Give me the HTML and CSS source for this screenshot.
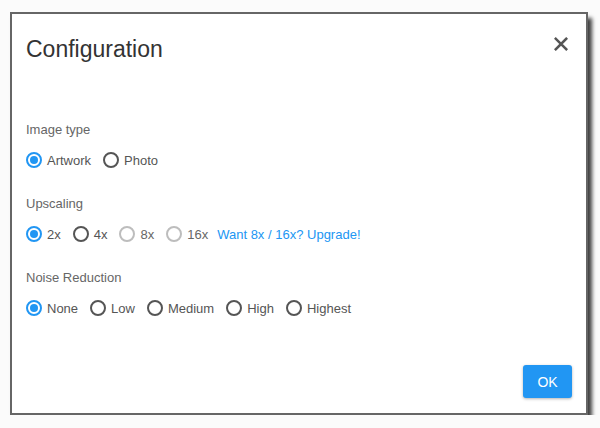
FILE: index.html
```html
<!DOCTYPE html>
<html>
<head>
    <title>Configuration</title>
    <meta name="viewport" content="width=device-width, initial-scale=1.0">
    <link rel="stylesheet" href="styles.css">
</head>
<body>
    <div class="dialog">
        <div class="dialog-header">
            <h2>Configuration</h2>
            <button class="close" type="button" aria-label="Close">
                <svg width="14" height="14" viewBox="0 0 14 14">
                    <path d="M1.8 1.8 L12.2 12.2 M12.2 1.8 L1.8 12.2" stroke="#555" stroke-width="2.6" stroke-linecap="square"/>
                </svg>
            </button>
        </div>

        <div class="field">
            <div class="field-label">Image type</div>
            <div class="options">
                <label class="option"><input type="radio" name="type" checked> Artwork</label>
                <label class="option"><input type="radio" name="type"> Photo</label>
            </div>
        </div>

        <div class="field">
            <div class="field-label">Upscaling</div>
            <div class="options">
                <label class="option"><input type="radio" name="scale" checked> 2x</label>
                <label class="option"><input type="radio" name="scale"> 4x</label>
                <label class="option disabled"><input type="radio" name="scale" disabled> 8x</label>
                <label class="option disabled"><input type="radio" name="scale" disabled> 16x</label>
                <a class="upgrade" href="#">Want 8x / 16x? Upgrade!</a>
            </div>
        </div>

        <div class="field">
            <div class="field-label">Noise Reduction</div>
            <div class="options">
                <label class="option"><input type="radio" name="noise" checked> None</label>
                <label class="option"><input type="radio" name="noise"> Low</label>
                <label class="option"><input type="radio" name="noise"> Medium</label>
                <label class="option"><input type="radio" name="noise"> High</label>
                <label class="option"><input type="radio" name="noise"> Highest</label>
            </div>
        </div>

        <div class="dialog-footer">
            <button class="ok" type="button">OK</button>
        </div>
    </div>
</body>
</html>
```

FILE: styles.css
```css
body {
    font-family: "Liberation Sans", Arial, sans-serif;
    background-color: #fbfbfb;
    margin: 0;
    padding: 12px 0 0 10px;
}
.dialog {
    width: 578px;
    height: 403px;
    box-sizing: border-box;
    background-color: #ffffff;
    border: 2px solid #666666;
    box-shadow: 4px 6px 4px rgba(0, 0, 0, 0.75);
    padding: 21px 14px 15px 14px;
    display: flex;
    flex-direction: column;
}
.dialog-header {
    display: flex;
    justify-content: space-between;
    align-items: flex-start;
    margin-bottom: 58px;
}
h2 {
    margin: 0;
    font-size: 23px;
    line-height: 28px;
    font-weight: normal;
    color: #333333;
}
.close {
    background: none;
    border: none;
    padding: 0;
    margin: 2px 4px 0 0;
    width: 14px;
    height: 14px;
    cursor: pointer;
}
.close svg {
    display: block;
}
.field {
    margin-bottom: 25px;
}
.field-label {
    font-size: 13px;
    line-height: 18px;
    color: #666666;
    margin-bottom: 11px;
}
.options {
    display: flex;
    align-items: center;
    height: 20px;
}
.option {
    display: flex;
    align-items: center;
    gap: 5px;
    font-size: 13px;
    color: #555555;
    margin-right: 12px;
    cursor: pointer;
}
.option input {
    appearance: none;
    -webkit-appearance: none;
    margin: 0;
    width: 16px;
    height: 16px;
    border: 2px solid #555555;
    border-radius: 50%;
    box-sizing: border-box;
    display: flex;
    align-items: center;
    justify-content: center;
}
.option input:checked {
    border-color: #2196F3;
}
.option input:checked::after {
    content: "";
    width: 8px;
    height: 8px;
    border-radius: 50%;
    background-color: #2196F3;
}
.option.disabled {
    color: #666666;
}
.option.disabled input {
    border-color: #bdbdbd;
}
.upgrade {
    font-size: 13px;
    color: #2196F3;
    text-decoration: none;
    margin-left: -3px;
}
.dialog-footer {
    margin-top: auto;
    display: flex;
    justify-content: flex-end;
}
.ok {
    background-color: #2196F3;
    color: white;
    border: none;
    border-radius: 3px;
    width: 49px;
    height: 33px;
    font-family: inherit;
    font-size: 14px;
    box-shadow: 0 1px 3px rgba(0, 0, 0, 0.3);
    cursor: pointer;
}
```
